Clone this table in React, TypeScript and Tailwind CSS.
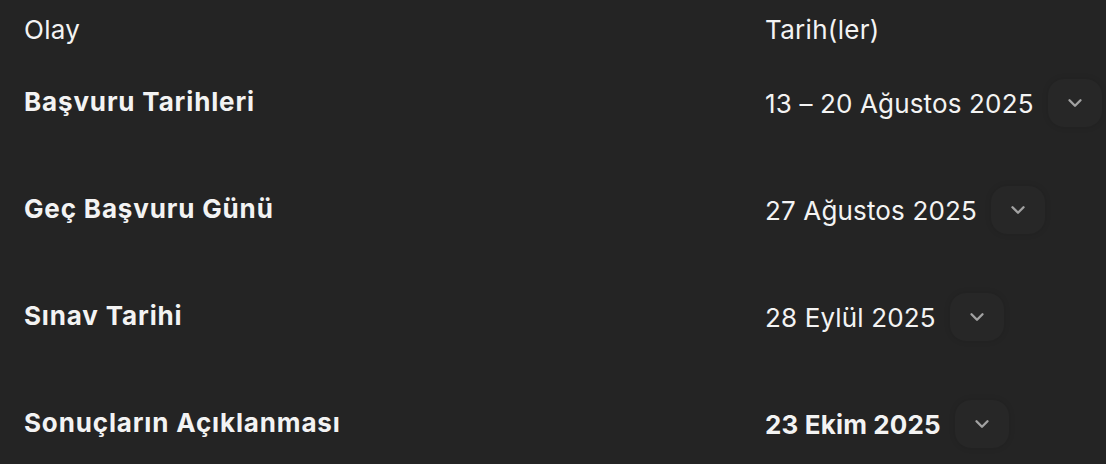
import { FiChevronDown } from 'react-icons/fi';

interface EventRow {
    label: string;
    date: string;
    highlight?: boolean;
}

const rows: EventRow[] = [
    { label: 'Başvuru Tarihleri', date: '13 – 20 Ağustos 2025' },
    { label: 'Geç Başvuru Günü', date: '27 Ağustos 2025' },
    { label: 'Sınav Tarihi', date: '28 Eylül 2025' },
    { label: 'Sonuçların Açıklanması', date: '23 Ekim 2025', highlight: true },
];

export default function App() {
    return (
        <div
            className="w-[1106px] h-[464px] bg-[#242424] text-[#f3f3f3] overflow-hidden"
            style={{ fontFamily: 'Inter, "Open Sans", sans-serif' }}
        >
            <div className="grid grid-cols-[741px_1fr] pl-6">
                {/* header */}
                <div className="h-[58px] flex items-center text-[26px] tracking-[0.3px]">Olay</div>
                <div className="h-[58px] flex items-center text-[26px] tracking-[0.3px]">Tarih(ler)</div>

                {rows.map((row) => (
                    <div key={row.label} className="contents">
                        <div className="h-[107px] pt-[21px]">
                            <div className="h-12 flex items-center -mt-[2px] text-[26px] font-bold tracking-[0.85px] whitespace-nowrap">
                                {row.label}
                            </div>
                        </div>
                        <div className="h-[107px] pt-[21px]">
                            <div className="flex items-center gap-[14px] whitespace-nowrap">
                                <span className={`text-[26px] tracking-[0.15px] ${row.highlight ? 'font-bold' : 'font-normal'}`}>
                                    {row.date}
                                </span>
                                <button className="w-[54px] h-[48px] rounded-[16px] bg-[#272727] shadow-[0_0_6px_rgba(0,0,0,0.12)] flex items-center justify-center text-[#a2a2a2]">
                                    <FiChevronDown size={22} strokeWidth={2.6} />
                                </button>
                            </div>
                        </div>
                    </div>
                ))}
            </div>
        </div>
    );
}
